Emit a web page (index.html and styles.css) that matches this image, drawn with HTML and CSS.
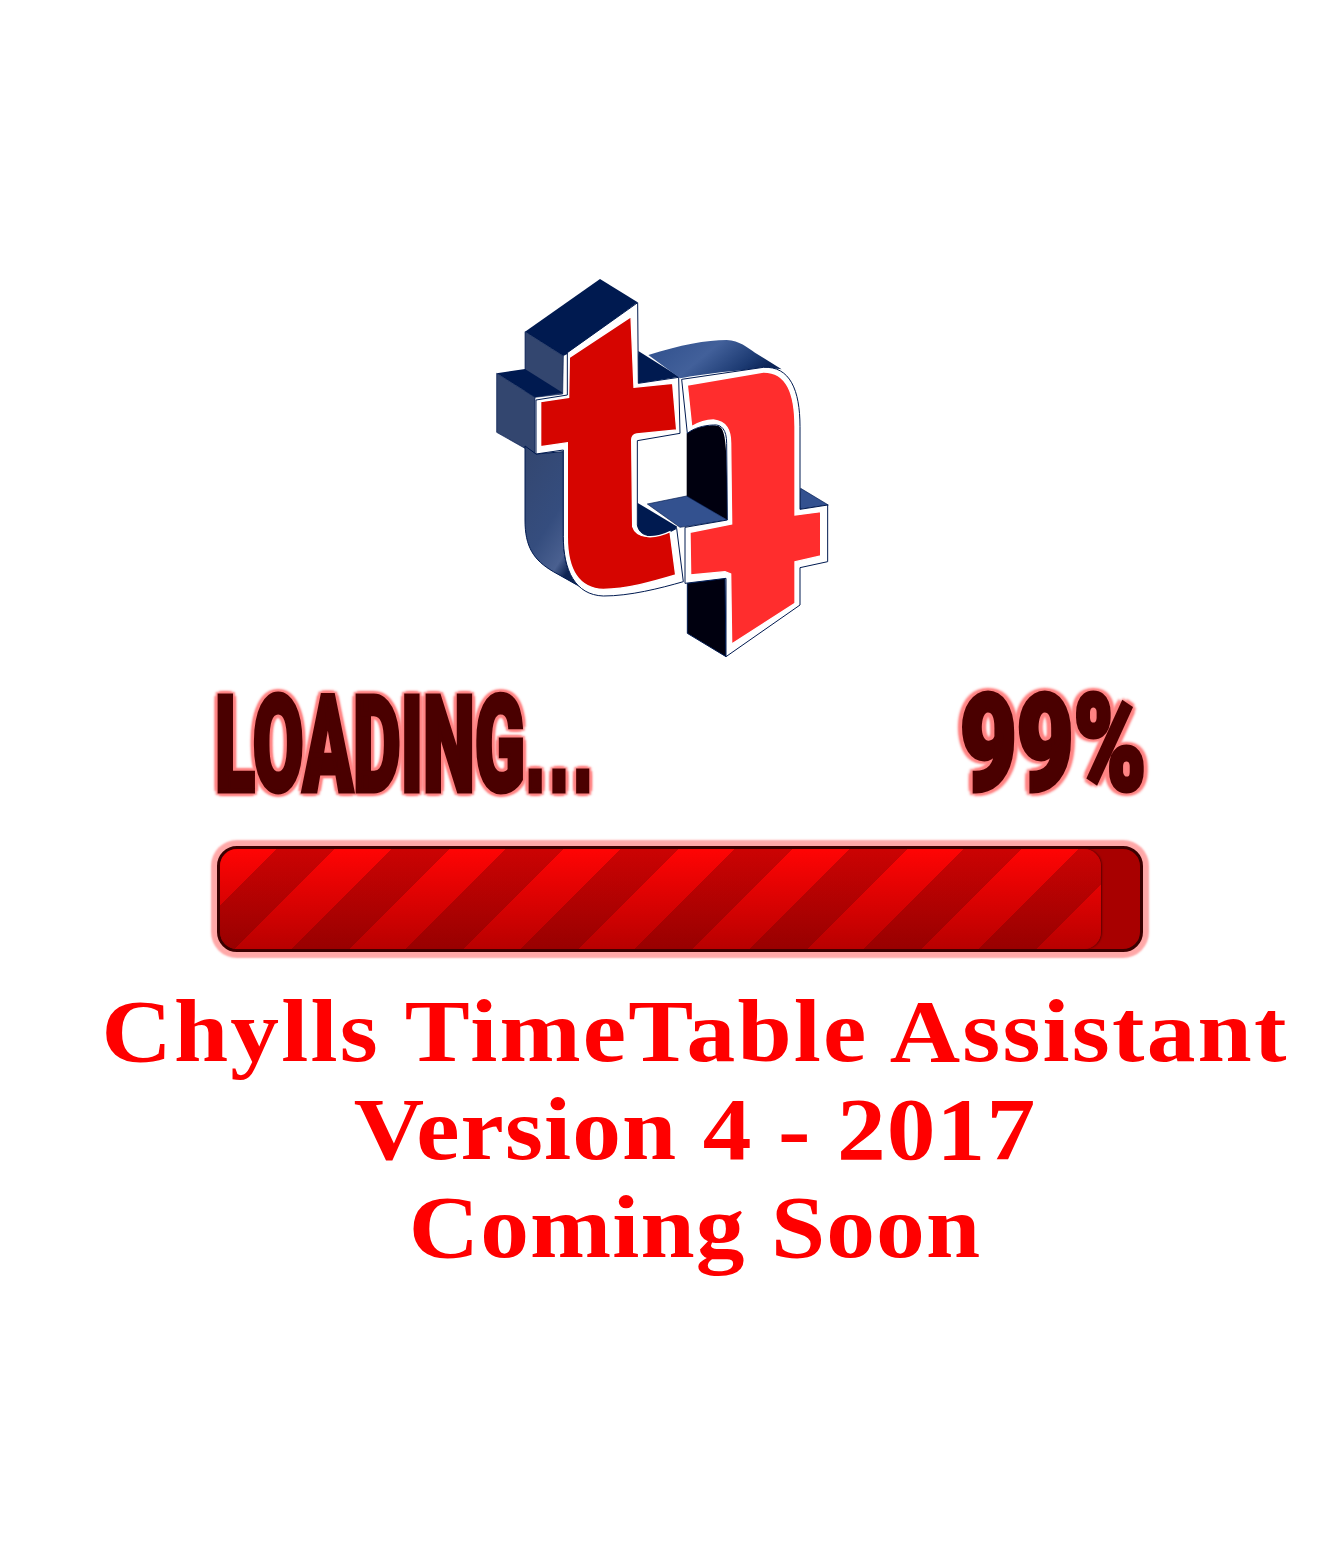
FILE: index.html
```html
<!DOCTYPE html>
<html lang="en">
<head>
    <meta charset="UTF-8">
    <meta name="viewport" content="width=device-width, initial-scale=1.0">
    <title>Chylls TimeTable Assistant</title>
    <link rel="stylesheet" href="styles.css">
</head>
<body>
    <div class="logo">
        <svg width="370" height="400" viewBox="0 0 1110 1200">
            <defs>
                <linearGradient id="qtop" x1="0" y1="0" x2="1" y2="0.35">
                    <stop offset="0" stop-color="#2f4f8c"/>
                    <stop offset="0.5" stop-color="#42609a"/>
                    <stop offset="0.85" stop-color="#1c3a72"/>
                    <stop offset="1" stop-color="#0c2558"/>
                </linearGradient>
                <linearGradient id="stem" x1="0" y1="0" x2="0.6" y2="1">
                    <stop offset="0" stop-color="#33466f"/>
                    <stop offset="0.6" stop-color="#354d7e"/>
                    <stop offset="0.88" stop-color="#4a6090"/>
                    <stop offset="1" stop-color="#0e2452"/>
                </linearGradient>
            </defs>
            <!-- extruded sides of the t -->
            <path fill="#001a50" d="M135,185 L360,27 L473,97 L262,252 L250,258 Z"/>
            <path fill="#33466f" stroke="#001a50" stroke-width="2" d="M135,185 L250,258 L248,372 L165,382 L135,362 Z"/>
            <path fill="#001a50" d="M50,310 L135,297 L248,368 L165,382 Z"/>
            <path fill="#33466f" stroke="#001a50" stroke-width="2" d="M50,310 L165,382 L165,552 L50,487 Z"/>
            <path fill="url(#stem)" stroke="#001a50" stroke-width="3" d="M135,528 L168,552 L250,545 L250,810 C252,880 270,925 300,950 L220,905 C160,870 135,830 135,750 Z"/>
            <path fill="#001a50" d="M475,243 L598,320 L470,342 Z"/>
            <path fill="#001a50" d="M472,698 L592,770 L578,790 C530,808 485,805 472,770 Z"/>

            <!-- extruded sides of the q -->
            <path fill="url(#qtop)" d="M505,255 C600,225 680,210 740,210 C780,212 800,232 825,248 L905,298 C860,292 700,305 600,325 Z"/>
            <path fill="#33518f" stroke="#001a50" stroke-width="2" d="M962,655 L1045,705 L960,718 Z"/>
            <path fill="#00000f" stroke="#001a50" stroke-width="3" d="M622,940 L735,925 L738,1160 L622,1090 Z"/>
            <path fill="#00000f" d="M620,490 C650,470 690,462 715,468 C735,478 742,500 742,750 L620,680 Z"/>
            <path fill="#33518f" stroke="#001a50" stroke-width="2" d="M502,702 L620,678 L742,750 L600,772 Z"/>

            <!-- t face -->
            <path fill="#fff" stroke="#001a50" stroke-width="3" d="M473,98 L262,248 L262,375 L168,390 L168,552 L250,540 L250,800 C250,900 285,975 370,978 C450,978 540,955 610,935 L590,775 C540,805 480,810 472,765 L472,512 L600,490 L596,322 L475,340 Z"/>
            <path fill="#d60500" stroke="#fff" stroke-width="4" d="M453,140 L268,262 L266,382 L182,395 L182,530 L262,518 L262,800 C262,890 290,955 370,958 C440,958 520,935 587,915 L570,785 C530,805 470,810 458,770 L455,510 Q455,495 470,492 L590,480 L578,340 L462,352 Z"/>

            <!-- q face -->
            <path fill="#fff" stroke="#001a50" stroke-width="3" d="M605,328 L850,292 C930,288 960,360 960,470 L960,718 L1043,705 L1043,875 L960,893 L960,1005 L738,1160 L738,925 L615,940 L615,772 L742,750 L740,520 C740,480 725,462 700,465 C670,466 640,475 622,490 Z"/>
            <path fill="#ff2d2d" stroke="#fff" stroke-width="4" d="M622,345 L850,306 C920,305 945,370 945,470 L945,735 L1022,725 L1022,858 L945,875 L945,1000 L755,1122 L752,912 L735,905 L632,915 L630,787 L755,762 L752,520 C752,480 740,455 700,450 C680,450 655,458 635,470 Z"/>
        </svg>
    </div>

    <div class="status">
        <span class="status-text status-loading">LOADING<span class="status-dots">...</span></span>
        <span class="status-text status-percent">99%</span>
    </div>

    <div class="bar">
        <div class="bar-fill"></div>
    </div>

    <div class="message">
        <div class="message-line">Chylls TimeTable Assistant</div>
        <div>Version 4 - 2017</div>
        <div>Coming Soon</div>
    </div>
</body>
</html>
```

FILE: styles.css
```css
* {
    margin: 0;
    padding: 0;
    box-sizing: border-box;
}

body {
    background: #fff;
    padding-top: 270px;
    min-height: 1544px;
    overflow: hidden;
}

.logo {
    height: 400px;
    margin-left: 480px;
}

.logo svg {
    display: block;
}

.status {
    display: flex;
    justify-content: space-between;
    width: 932px;
    height: 160px;
    margin-left: 215px;
}

.status-text {
    min-width: 0;
    font-family: Roboto, "Liberation Sans", sans-serif;
    font-size: 134px;
    font-weight: 900;
    line-height: 150px;
    white-space: nowrap;
    color: #4a0000;
    -webkit-text-stroke: 5px #4a0000;
    text-shadow:
        0 0 2px #e00000,
        8px 0 3px #ff8484,
        -8px 0 3px #ff8484,
        0 5px 3px #ff8484,
        0 -5px 3px #ff8484,
        6px 4px 3px #ff8484,
        -6px 4px 3px #ff8484,
        6px -4px 3px #ff8484,
        -6px -4px 3px #ff8484;
    transform-origin: left center;
}

.status-loading {
    flex: 0 0 375px;
    transform: scaleX(0.55);
}

.status-dots {
    font-family: "Liberation Sans", sans-serif;
    font-weight: bold;
    letter-spacing: 6px;
}

.status-percent {
    flex: 0 0 187px;
    transform: scaleX(0.73);
}

.bar {
    width: 926px;
    height: 106px;
    margin-left: 217px;
    margin-top: 16px;
    background: #a80000;
    border: 3px solid #3a0000;
    border-radius: 20px;
    box-shadow: 0 0 2px 6px #ffa8a8;
}

.bar-fill {
    width: 881px;
    height: 100%;
    border-radius: 17px;
    box-shadow: 1px 0 2px #5c0000;
    background:
        repeating-linear-gradient(135deg, transparent 0, transparent 40px, rgba(70, 0, 0, 0.28) 40px, rgba(70, 0, 0, 0.28) 81px),
        linear-gradient(#ff0404, #b80000);
}

.message {
    width: 1090px;
    margin-top: 31px;
    margin-left: 150px;
    text-align: center;
    font-family: "Liberation Serif", "Times New Roman", serif;
    font-size: 88px;
    font-weight: bold;
    line-height: 98px;
    letter-spacing: 1px;
    color: #f00;
    transform: scaleX(1.107);
}

.message-line {
    letter-spacing: 2px;
}
```
